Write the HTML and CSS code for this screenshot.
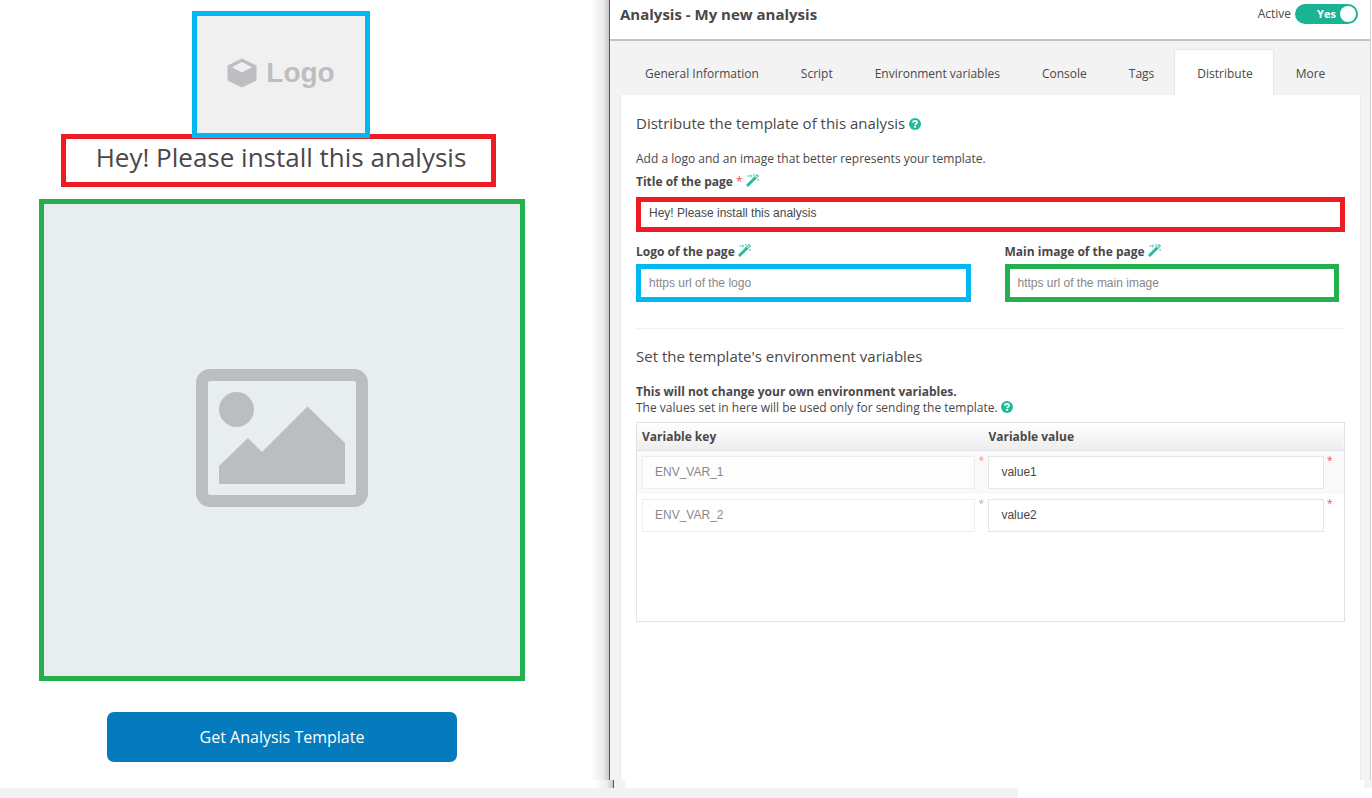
FILE: index.html
```html
<!DOCTYPE html>
<html lang="en">
<head>
<meta charset="utf-8">
<title>Analysis - My new analysis</title>
<link rel="stylesheet" href="styles.css">
</head>
<body>
<svg class="sprite" aria-hidden="true">
  <symbol id="help" viewBox="0 0 12 12">
    <circle cx="6" cy="6" r="6" fill="#1fbb9b"/>
    <path d="M3.800 4.600C4 3.200 4.900 2.800 6 2.800c1.300 0 2.100.7 2.100 1.700C8.100 5.900 6.100 5.700 6.100 7.300" fill="none" stroke="#fff" stroke-width="1.800"/>
    <rect x="5.100" y="8" width="2" height="1.700" fill="#fff"/>
  </symbol>
  <symbol id="wand" viewBox="0 0 13 13">
    <path d="M1 12 9 4" stroke="#1fbb9b" stroke-width="2.800" fill="none"/>
    <path d="M8.500 4.500 12 1" stroke="#1fbb9b" stroke-width="2.800" fill="none"/>
    <path d="M9.300 3.700 11.400 1.600" stroke="#fff" stroke-width="1.200" fill="none"/>
    <path d="M4.800 0.500v3M3.300 2h3M7.800 0v1.600M7 .8h1.600M2.300 1.200v1.400M1.600 1.900H3M12 5v1.800M11.100 5.900h1.800" stroke="#1fbb9b" stroke-width=".6" fill="none"/>
  </symbol>
</svg>
<main class="split">
  <section class="preview">
    <div class="logo">
      <svg width="30" height="30" viewBox="0 0 30 30" aria-hidden="true"><path fill="#bdbec1" fill-rule="evenodd" d="M15 .5 29.500 7.500V22.500L15 29.500.5 22.500V7.500ZM15 4 5 9.200 15 14.600 25 9.200Z"/></svg>
      <span>Logo</span>
    </div>
    <h1 class="headline">Hey! Please install this analysis</h1>
    <div class="picture">
      <svg width="172" height="138" viewBox="0 0 172 138" role="img" aria-label="Image placeholder">
        <rect x="6" y="6" width="160" height="126" rx="8" fill="none" stroke="#babec1" stroke-width="12"/>
        <circle cx="40.500" cy="40.500" r="17.500" fill="#babec1"/>
        <path fill="#babec1" d="M23 97 52 69 66 83 111.500 37.500 149 74V115H23Z"/>
      </svg>
    </div>
    <button class="get" type="button">Get Analysis Template</button>
  </section>
  <section class="editor">
    <header class="bar">
      <h2>Analysis - My new analysis</h2>
      <label class="active">Active
        <span class="toggle"><input type="checkbox" checked><span>Yes</span></span>
      </label>
    </header>
    <div class="body">
      <nav class="tabs">
        <button type="button">General Information</button>
        <button type="button">Script</button>
        <button type="button">Environment variables</button>
        <button type="button">Console</button>
        <button type="button">Tags</button>
        <button type="button" class="on">Distribute</button>
        <button type="button">More</button>
      </nav>
      <div class="panel">
        <h3>Distribute the template of this analysis <svg class="ico"><use href="#help"/></svg></h3>
        <p class="intro">Add a logo and an image that better represents your template.</p>
        <div class="field">
          <label for="title">Title of the page <em>*</em> <svg class="ico wand"><use href="#wand"/></svg></label>
          <input id="title" class="box red" type="text" value="Hey! Please install this analysis">
        </div>
        <div class="pair">
          <div class="field">
            <label for="logo">Logo of the page <svg class="ico wand"><use href="#wand"/></svg></label>
            <input id="logo" class="box blue" type="text" placeholder="https url of the logo">
          </div>
          <div class="field">
            <label for="image">Main image of the page <svg class="ico wand"><use href="#wand"/></svg></label>
            <input id="image" class="box green" type="text" placeholder="https url of the main image">
          </div>
        </div>
        <hr>
        <h3>Set the template's environment variables</h3>
        <p class="note"><strong>This will not change your own environment variables.</strong><br>The values set in here will be used only for sending the template. <svg class="ico"><use href="#help"/></svg></p>
        <div class="tablebox">
          <table>
            <thead><tr><th>Variable key</th><th>Variable value</th></tr></thead>
            <tbody>
              <tr>
                <td><div class="cell off"><input type="text" aria-label="Variable key 1" value="ENV_VAR_1" disabled><em>*</em></div></td>
                <td><div class="cell"><input type="text" aria-label="Variable value 1" value="value1"><em>*</em></div></td>
              </tr>
              <tr>
                <td><div class="cell off"><input type="text" aria-label="Variable key 2" value="ENV_VAR_2" disabled><em>*</em></div></td>
                <td><div class="cell"><input type="text" aria-label="Variable value 2" value="value2"><em>*</em></div></td>
              </tr>
            </tbody>
          </table>
        </div>
      </div>
    </div>
  </section>
</main>
<div class="edge"><div class="edge-left"></div><div class="edge-right"></div></div>
<footer class="foot"><div></div></footer>
</body>
</html>
```
FILE: styles.css
```css
* { box-sizing: border-box; }
body {
  margin: 0;
  min-height: 100vh;
  display: flex;
  flex-direction: column;
  background: #fff;
  color: #4a4748;
  font: 12px/16px "Open Sans", "Noto Sans", sans-serif;
}
h1, h2, h3, p { margin: 0; font-weight: 400; }
button, input { font: inherit; color: inherit; }
em { color: #ed5565; font-style: normal; font-weight: 400; }
.sprite { position: absolute; width: 0; height: 0; }
.ico { width: 12px; height: 12px; vertical-align: -1px; }
.wand { width: 13px; height: 13px; }

.split { flex: 1; display: grid; grid-template-columns: minmax(0, 609fr) minmax(0, 763fr); }

.preview {
  display: flex;
  flex-direction: column;
  align-items: center;
  padding: 11px 45px 18px 0;
  background: linear-gradient(to left, #c8c8c8, #ececec 6px, #fff 18px);
}
.logo {
  z-index: 1;
  width: 178px;
  height: 127px;
  margin-right: 2px;
  padding-bottom: 4px;
  display: flex;
  align-items: center;
  justify-content: center;
  gap: 9px;
  border: 5px solid #00b7f1;
  background: #f0f0f0;
  color: #bdbec1;
  font: bold 28px/34px "Liberation Sans", Arial, sans-serif;
}
.headline {
  width: 435px;
  margin: -4px 8px 12px 0;
  padding: 0 0 6px 6px;
  border: 5px solid #ee1b24;
  font-size: 26px;
  line-height: 37px;
  text-align: center;
  white-space: nowrap;
}
.picture {
  width: 486px;
  height: 482px;
  padding-bottom: 4px;
  display: flex;
  align-items: center;
  justify-content: center;
  border: 5px solid #22b14c;
  background: #e8edf0;
}
.get {
  width: 350px;
  height: 50px;
  margin-top: 31px;
  border: 0;
  border-radius: 7px;
  background: #057bbe;
  color: #fff;
  font-size: 16px;
}

.editor {
  display: flex;
  flex-direction: column;
  margin-right: 1px;
  border-left: 1px solid #2b6199;
  border-right: 1px solid #d0d0d0;
  background: #f3f3f4;
}
.bar {
  height: 41px;
  padding: 4px 12px 0 10px;
  display: flex;
  justify-content: space-between;
  align-items: flex-start;
  background: #fff;
  border-bottom: 2px solid #c2c4c4;
}
.bar h2 { font-size: 15px; line-height: 21px; font-weight: 700; }
.active { display: flex; align-items: center; gap: 4px; line-height: 20px; }
.toggle { position: relative; width: 63px; height: 20px; border-radius: 10px; background: #1ab394; color: #fff; font-weight: 700; font-size: 11px; text-align: center; }
.toggle span { position: relative; }
.toggle input { appearance: none; position: absolute; inset: 0; margin: 0; }
.toggle input::after { content: ""; position: absolute; right: 2px; top: 2px; width: 16px; height: 16px; border-radius: 50%; background: #fff; }

.body { flex: 1; display: flex; flex-direction: column; padding: 8px 9px 0 10px; }
.tabs { display: flex; height: 47px; margin-bottom: -1px; }
.tabs button {
  padding: 4px 20px 0 22px;
  border: 0;
  border-bottom: 1px solid #e7eaec;
  background: none;
  white-space: nowrap;
}
.tabs button:first-child { padding-left: 25px; }
.tabs::after { content: ""; flex: 1; border-bottom: 1px solid #e7eaec; }
.tabs .on { padding-top: 3px; border: 1px solid #e7eaec; border-bottom-color: #fff; border-radius: 3px 3px 0 0; background: #fff; }
.panel { flex: 1; padding: 18px 15px; background: #fff; border: solid #e7eaec; border-width: 0 1px; }
h3 { font-size: 15px; line-height: 20px; font-weight: 400; }
.intro { margin-top: 18px; margin-bottom: 3px; }
.field { display: flex; flex-direction: column; align-items: stretch; }
.field label { font-weight: 700; line-height: 23px; }
.box {
  width: 100%;
  height: 35px;
  padding: 0 8px 4px;
  border: 5px solid;
  background: #fff;
  font-family: "Liberation Sans", Arial, sans-serif;
}
.field .box { margin-top: 4px; }
.red { border-color: #ee1b24; }
.blue { border-color: #00b7f1; }
.green { border-color: #22b14c; }
.box::placeholder { color: #8a8687; opacity: 1; }
.pair { display: grid; grid-template-columns: 1fr 1fr; gap: 34px; margin-top: 8px; padding-right: 6px; }
.pair .box { height: 38px; margin-top: 1px; padding-bottom: 0; }
hr { height: 1px; margin: 26px 0 17px; border: 0; background: #f1f1f1; }
.note { margin: 18px 0 6px; }
.tablebox { height: 200px; border: 1px solid #e0e2ec; }
table { width: 100%; border-collapse: collapse; table-layout: fixed; }
thead tr { height: 27px; background: linear-gradient(#fff, #ededee); }
thead { border-bottom: 1px solid #e0e2ec; }
th { padding: 1px 5px 0; text-align: left; font-weight: 700; }
th:first-child { width: 49%; }
td { padding: 5px 12px 5px 5px; }
td:first-child { padding-right: 0; }
tbody tr:first-child { background: #f9f9f9; }
.cell { display: grid; grid-template-columns: 1fr 8px; }
.cell input {
  width: 100%;
  height: 33px;
  padding: 0 12px;
  border: 1px solid #e5e6e7;
  background: #fff;
  font-family: "Liberation Sans", Arial, sans-serif;
}
.cell em { padding-left: 3px; font-size: 10px; line-height: 8px; }
.off { opacity: .65; }

.edge { display: grid; height: 8px; grid-template-columns: minmax(0, 613fr) minmax(0, 759fr); }
.edge-left { background: linear-gradient(to left, #c8c8c8, #ececec 6px, #fff 18px); }
.edge-right { border-left: 1px solid #2b6199; background: linear-gradient(to right, #f3f3f4 11px, #fff 11px calc(100% - 8px), #f3f3f4 calc(100% - 8px)); }
.foot { height: 10px; }
.foot div { width: 74.2%; height: 100%; background: #f2f2f2; }
```
